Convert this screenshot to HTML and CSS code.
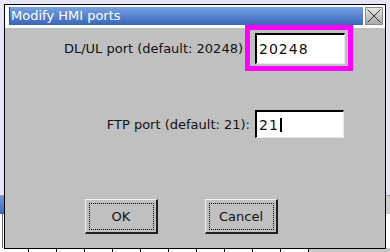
FILE: index.html
```html
<!DOCTYPE html>
<html lang="en">
<head>
    <meta charset="UTF-8">
    <title>Modify HMI ports</title>
    <link rel="stylesheet" href="styles.css">
</head>
<body>
    <div class="desktop">
        <div class="desk-space"></div>
        <div class="toolbar">
            <div class="tab">k</div>
            <div class="tool-btn">&lt;</div>
        </div>
        <div class="sheet"><div class="sheet-line"></div></div>
        <div class="grid-row">
            <span></span><span></span><span></span><span></span><span></span><span></span>
            <span></span><span></span><span></span><span></span><span></span>
            <div class="grid-rest"></div>
        </div>
    </div>

    <div class="dialog">
        <header class="dialog-head">
            <div class="title-bar">Modify HMI ports</div>
            <div class="close-btn">
                <svg width="18" height="18" viewBox="0 0 18 18">
                    <line x1="2.5" y1="2.5" x2="15.5" y2="15.5" stroke="#333" stroke-width="1"/>
                    <line x1="15.5" y1="2.5" x2="2.5" y2="15.5" stroke="#333" stroke-width="1"/>
                </svg>
            </div>
        </header>

        <section class="dialog-body">
            <div class="form">
                <label class="label label-first">DL/UL port (default: 20248)</label>
                <div class="field field-first">20248</div>

                <label class="label label-second">FTP port (default: 21):</label>
                <div class="field field-second">21<span class="caret"></span></div>
            </div>

            <div class="buttons">
                <button class="btn">OK</button>
                <button class="btn">Cancel</button>
            </div>
        </section>

        <div class="highlight"></div>
    </div>
</body>
</html>
```

FILE: styles.css
```css
body {
    margin: 0;
    padding: 0;
    font-family: "DejaVu Sans", sans-serif;
    font-size: 13px;
    background: #e6e6f6;
    width: 390px;
    height: 252px;
    overflow: hidden;
    position: relative;
}

/* window underneath the dialog */
.desktop {
    display: flex;
    flex-direction: column;
    height: 252px;
}

.desk-space {
    flex: 1;
}

.toolbar {
    height: 18px;
    display: flex;
    justify-content: space-between;
    border-top: 1px solid #9a9aa8;
    background: #d4d4d4;
}

.tab {
    width: 30px;
    background: linear-gradient(#6f98dc, #3c68b6);
    color: #fff;
    line-height: 18px;
    text-align: right;
}

.tool-btn {
    width: 20px;
    background: #d0d0d0;
    color: #555;
    line-height: 18px;
}

.sheet {
    height: 34px;
    background: #fff;
    padding-left: 2px;
}

.sheet-line {
    width: 1px;
    height: 100%;
    background: #666;
}

.grid-row {
    height: 4px;
    display: flex;
    background: #fff;
}

.grid-row span {
    width: 27px;
    border-right: 1px solid #000;
}

.grid-row span:first-child {
    width: 28px;
}

.grid-rest {
    flex: 1;
    background: #c8c8c8;
}

/* dialog */
.dialog {
    position: absolute;
    left: 4px;
    top: 4px;
    width: 380px;
    height: 243px;
    border: 1px solid #000;
    background: #c0c0c0;
    display: flex;
    flex-direction: column;
}

.dialog-head {
    display: flex;
    gap: 2px;
    padding: 2px 2px 3px 4px;
    background: #fff;
}

.title-bar {
    flex: 1;
    height: 18px;
    line-height: 18px;
    padding-left: 2px;
    color: #fff;
    background: linear-gradient(#77a0e2, #3a66b6);
    box-shadow: inset 1px 0 #2d4f90;
}

.close-btn {
    width: 18px;
    height: 18px;
    box-sizing: border-box;
    background: linear-gradient(#e8e8e8, #a9a9a9);
    border: 1px solid #8a8a8a;
    display: flex;
}

.close-btn svg {
    margin: -1px;
}

.dialog-body {
    flex: 1;
    display: flex;
    flex-direction: column;
    padding: 5px 41px 0 0;
}

.form {
    display: grid;
    grid-template-columns: 1fr 89px;
    column-gap: 5px;
    align-items: center;
    row-gap: 46px;
}

.label {
    text-align: right;
    color: #111;
}

.label-first {
    margin-right: 7px;
    margin-top: -1px;
}

.field {
    box-sizing: border-box;
    background: #fff;
    border-top: 2px solid #000;
    border-left: 2px solid #000;
    border-right: 1px solid #e8e8e8;
    border-bottom: 1px solid #e8e8e8;
    padding-left: 2px;
    font-size: 14px;
    letter-spacing: 1px;
    color: #111;
    display: flex;
    align-items: center;
}

.field-first {
    height: 31px;
    width: 90px;
}

.field-second {
    height: 28px;
}

.caret {
    display: inline-block;
    width: 2px;
    height: 14px;
    background: #000;
    margin-left: 1px;
}

.buttons {
    display: flex;
    gap: 47px;
    padding-left: 80px;
    margin-top: 61px;
}

.btn {
    width: 73px;
    height: 35px;
    box-sizing: border-box;
    font-family: "DejaVu Sans", sans-serif;
    font-size: 13px;
    color: #111;
    background: #c0c0c0;
    border-top: 1px solid #f4f4f4;
    border-left: 1px solid #f4f4f4;
    border-right: 2px solid #202020;
    border-bottom: 2px solid #202020;
    outline: 1px dotted #000;
    outline-offset: -5px;
    padding: 0;
}

/* annotation drawn over the dialog */
.highlight {
    position: absolute;
    left: 240px;
    top: 20px;
    width: 98px;
    height: 36px;
    border: 5px solid #ff00ff;
}
```
